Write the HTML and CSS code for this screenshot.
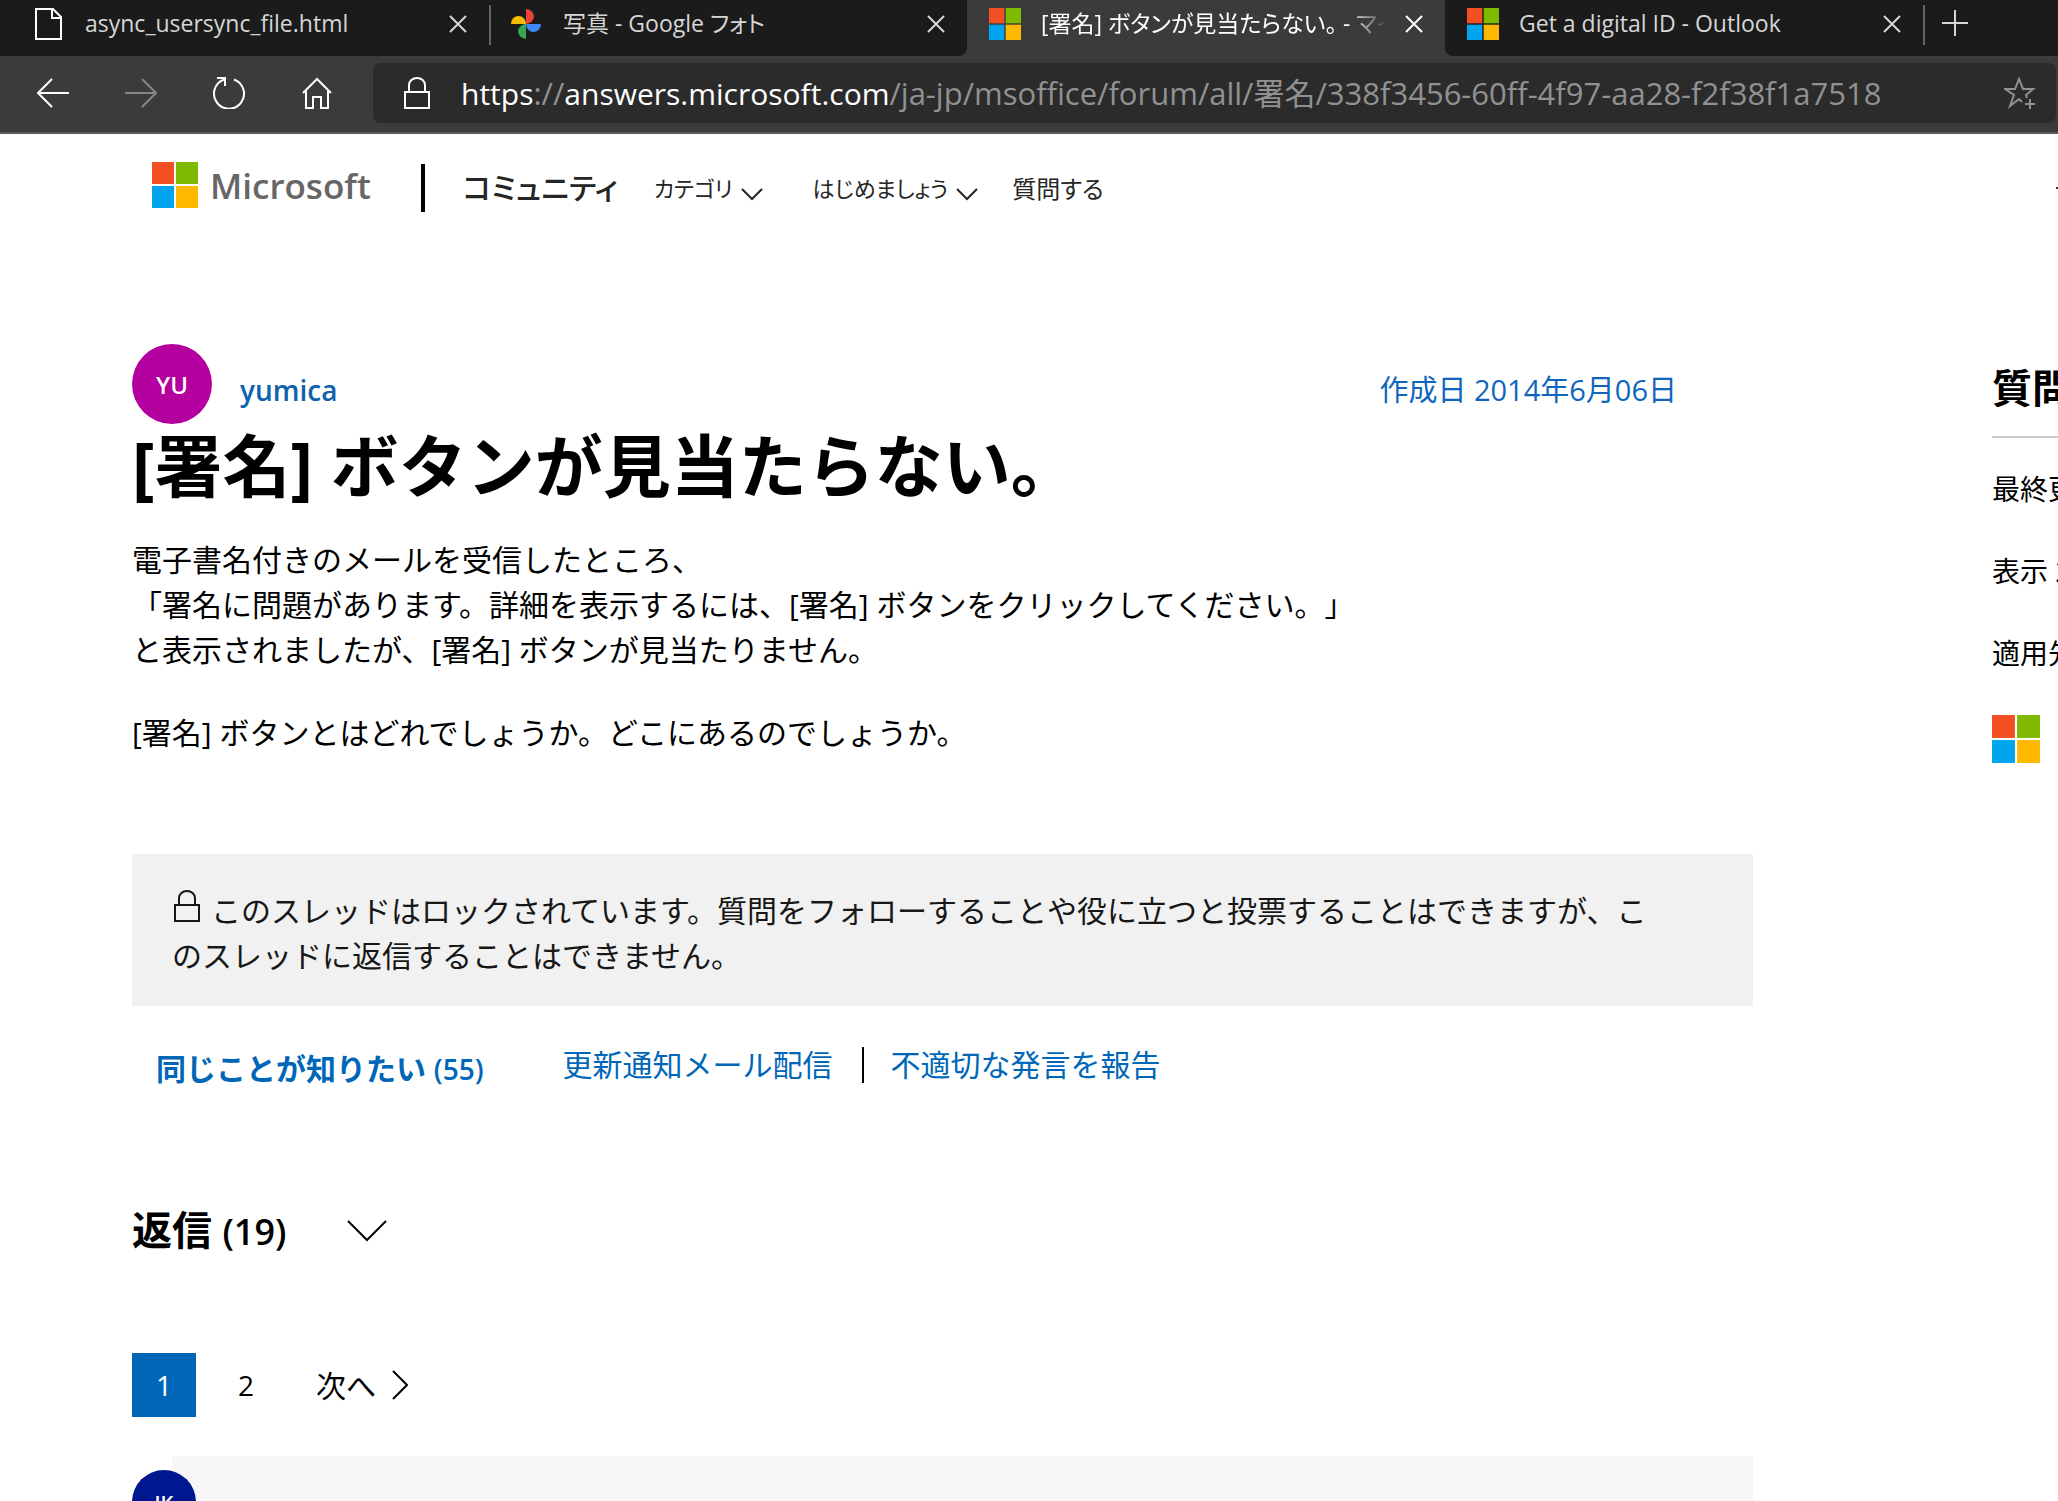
FILE: index.html
```html
<!DOCTYPE html>
<html lang="ja">
<head>
<meta charset="utf-8">
<title>[署名] ボタンが見当たらない。 - マイクロソフト コミュニティ</title>
<link rel="stylesheet" href="styles.css">
</head>
<body>
<svg class="defs" aria-hidden="true">
  <symbol id="ms" viewBox="0 0 46 46" preserveAspectRatio="none">
    <path fill="#f25022" d="M0 0h22v22H0z"/><path fill="#7fba00" d="M24 0h22v22H24z"/>
    <path fill="#00a4ef" d="M0 24h22v22H0z"/><path fill="#ffb900" d="M24 24h22v22H24z"/>
  </symbol>
  <symbol id="close" viewBox="0 0 18 18"><path d="M1 1l16 16M17 1L1 17" fill="none" stroke="currentColor" stroke-width="2"/></symbol>
  <symbol id="lock" viewBox="0 0 26 32"><path d="M1 15h24v16H1zM5 15V8a8 7 0 0 1 16 0v7" fill="none" stroke="currentColor" stroke-width="2"/></symbol>
  <symbol id="down" viewBox="0 0 40 22"><path d="M1 1l19 19L39 1" fill="none" stroke="currentColor" stroke-width="2"/></symbol>
  <symbol id="down-small" viewBox="0 0 22 14"><path d="M1 2l10 10L21 2" fill="none" stroke="currentColor" stroke-width="2"/></symbol>
</svg>

<nav class="tabs" aria-label="タブ">
  <div class="tab-group tab-group-left">
    <div class="tab">
      <svg class="tab-icon" viewBox="0 0 32 32"><path d="M3 1h17l8 8v22H3zM19 1v9h9" fill="none" stroke="#fff" stroke-width="2"/></svg>
      <span class="tab-title">async_usersync_file.html</span>
      <button class="tab-close" aria-label="タブを閉じる"><svg><use href="#close"/></svg></button>
    </div>
    <div class="tab tab-divided">
      <svg class="tab-icon" viewBox="0 0 32 32"><path fill="#ea4335" d="M15 1a8 8 0 0 1 8 7.500a8 8 0 0 1-8 7.500z"/><path fill="#4285f4" d="M30 16a7.500 8 0 0 1-15 0z"/><path fill="#34a853" d="M15 31a8 8 0 0 1-8-7.500a8 8 0 0 1 8-7.500z"/><path fill="#fbbc04" d="M0 16a7.500 8 0 0 1 15 0z"/></svg>
      <span class="tab-title">写真 - Google フォト</span>
      <button class="tab-close" aria-label="タブを閉じる"><svg><use href="#close"/></svg></button>
    </div>
  </div>
  <div class="tab tab-active">
    <svg class="tab-icon"><use href="#ms"/></svg>
    <span class="tab-title">[署名] ボタンが見当たらない。 - マイクロソフト</span>
    <button class="tab-close" aria-label="タブを閉じる"><svg><use href="#close"/></svg></button>
  </div>
  <div class="tab-group tab-group-right">
    <div class="tab">
      <svg class="tab-icon"><use href="#ms"/></svg>
      <span class="tab-title">Get a digital ID - Outlook</span>
      <button class="tab-close" aria-label="タブを閉じる"><svg><use href="#close"/></svg></button>
    </div>
    <button class="tab-new" aria-label="新しいタブ"><svg viewBox="0 0 26 26"><path d="M13 0v26M0 13h26" stroke="currentColor" stroke-width="2"/></svg></button>
  </div>
</nav>

<div class="toolbar">
  <button class="tool" aria-label="戻る"><svg viewBox="0 0 32 32"><path d="M32 16H1M15 2L1 16l14 14" fill="none" stroke="currentColor" stroke-width="2"/></svg></button>
  <button class="tool" aria-label="進む" disabled><svg viewBox="0 0 32 32"><path d="M0 16h31M17 2l14 14-14 14" fill="none" stroke="currentColor" stroke-width="2"/></svg></button>
  <button class="tool" aria-label="更新"><svg viewBox="0 0 32 32"><path d="M21 2.500A15 15 0 1 1 11 2.500M4 1h8v8" fill="none" stroke="currentColor" stroke-width="2"/></svg></button>
  <button class="tool" aria-label="ホーム"><svg viewBox="0 0 32 32"><path d="M2 16L16 2l14 14M5 14v17h7V20h8v11h7V14" fill="none" stroke="currentColor" stroke-width="2"/></svg></button>
  <div class="address">
    <svg class="address-lock"><use href="#lock"/></svg>
    <div class="url"><b>https</b>://<b>answers.microsoft.com</b>/ja-jp/msoffice/forum/all/署名/338f3456-60ff-4f97-aa28-f2f38f1a7518</div>
    <button class="star" aria-label="お気に入りに追加"><svg viewBox="0 0 32 32"><path d="M18 25l-3-3-9 7 4-11-9-6h10l4-10 4 10h10l-7 6 1 3M26 22v10M21 27h10" fill="none" stroke="currentColor" stroke-width="2"/></svg></button>
  </div>
</div>

<div class="page">
  <header class="site-header">
    <a class="brand" href="#"><svg class="brand-logo"><use href="#ms"/></svg><span>Microsoft</span></a>
    <a class="community" href="#">コミュニティ</a>
    <button class="menu">カテゴリ<svg><use href="#down-small"/></svg></button>
    <button class="menu">はじめましょう<svg><use href="#down-small"/></svg></button>
    <a class="ask" href="#">質問する</a>
    <button class="search" aria-label="検索"><svg viewBox="0 0 2 12"><path d="M0 5h2v2H0z" fill="#333"/></svg></button>
  </header>

  <div class="columns">
    <main>
      <div class="author">
        <span class="avatar">YU</span>
        <a class="author-name" href="#">yumica</a>
        <a class="created" href="#">作成日 2014年6月06日</a>
      </div>
      <h1>[署名] ボタンが見当たらない。</h1>
      <div class="body">
        <p>電子書名付きのメールを受信したところ、<br>「署名に問題があります。詳細を表示するには、[署名] ボタンをクリックしてください。」<br>と表示されましたが、[署名] ボタンが見当たりません。</p>
        <p>[署名] ボタンとはどれでしょうか。どこにあるのでしょうか。</p>
      </div>
      <div class="locked"><svg><use href="#lock"/></svg>このスレッドはロックされています。質問をフォローすることや役に立つと投票することはできますが、このスレッドに返信することはできません。</div>
      <div class="actions">
        <button class="same">同じことが知りたい <span>(55)</span></button>
        <a class="action" href="#">更新通知メール配信</a>
        <a class="action action-divided" href="#">不適切な発言を報告</a>
      </div>
      <h2><span>返信 <span class="count">(19)</span></span><button class="expand" aria-label="並べ替え"><svg><use href="#down"/></svg></button></h2>
      <nav class="pager" aria-label="ページ">
        <a class="page-no page-current" href="#">1</a>
        <a class="page-no" href="#">2</a>
        <a class="next" href="#">次へ<svg viewBox="0 0 16 30"><path d="M1 1l14 14L1 29" fill="none" stroke="currentColor" stroke-width="2"/></svg></a>
      </nav>
      <article class="reply">
        <span class="avatar avatar-small">JK</span>
        <div class="reply-card"></div>
      </article>
    </main>
    <aside>
      <h3>質問情報</h3>
      <p>最終更新日</p>
      <p>表示 2,000</p>
      <p>適用先:</p>
      <svg class="side-logo"><use href="#ms"/></svg>
    </aside>
  </div>
</div>
</body>
</html>
```
FILE: styles.css
```css
* { box-sizing: border-box; }

body {
  margin: 0;
  height: 100vh;
  overflow: hidden;
  display: flex;
  flex-direction: column;
  background: #fff;
  color: #000;
  font-family: "Open Sans", "Noto Sans CJK JP", sans-serif;
  font-size: 30px;
  line-height: 45px;
  text-spacing-trim: space-all;
}

button {
  padding: 0;
  border: 0;
  background: none;
  color: inherit;
  font: inherit;
}

a { color: inherit; text-decoration: none; }
h1, h2, h3, p { margin: 0; }
svg { display: block; flex: none; }
.defs { position: absolute; width: 0; height: 0; }

/* Browser tabs */
.tabs {
  flex: none;
  display: flex;
  height: 56px;
  background: #3b3b3b;
  color: #d6d6d6;
  font-size: 23px;
  line-height: 32px;
  font-feature-settings: "palt";
}

.tab-group { display: flex; background: #1b1b1b; }
.tab-group-left { padding-left: 11px; border-bottom-right-radius: 8px; }
.tab-group-right { flex: 1; border-bottom-left-radius: 8px; }

.tab {
  display: flex;
  width: 478px;
  height: 48px;
  padding: 0 22px;
  align-items: center;
}

.tab-divided { background: linear-gradient(#666, #666) 0 5px / 2px 40px no-repeat; }
.tab-active { color: #fff; }
.tab-icon { width: 32px; height: 32px; margin-right: 20px; }
.tab-title {
  flex: 1;
  overflow: hidden;
  margin-right: 18px;
  padding-bottom: 2px;
  white-space: nowrap;
}

.tab-active .tab-title {
  -webkit-mask-image: linear-gradient(90deg, #000 88%, transparent);
  mask-image: linear-gradient(90deg, #000 88%, transparent);
}

.tab-close svg { width: 18px; height: 18px; }

.tab-new {
  height: 46px;
  padding-left: 19px;
  background: linear-gradient(#666, #666) 0 5px / 2px 40px no-repeat;
}

.tab-new svg { width: 26px; height: 26px; }

/* Browser toolbar */
.toolbar {
  flex: none;
  display: flex;
  align-items: center;
  height: 78px;
  padding: 6px 2px 8px 9px;
  border-bottom: 2px solid #5c5c5c;
  background: #3b3b3b;
  color: #fff;
}

.tool { display: flex; justify-content: center; width: 88px; }
.tool:disabled { color: #858585; }
.tool svg { width: 32px; height: 32px; }

.address {
  flex: 1;
  display: flex;
  align-items: center;
  height: 60px;
  margin-left: 12px;
  padding: 0 20px 0 31px;
  border-radius: 8px;
  background: #2b2b2b;
  color: #919191;
}

.address-lock { width: 26px; height: 32px; margin-right: 31px; color: #fff; }
.url { flex: 1; white-space: nowrap; font-size: 31px; }
.url b { color: #fff; font-size: 30px; font-weight: 400; }
.star svg { width: 32px; height: 32px; }

/* Site header */
.page { flex: 1; overflow: hidden; }

.site-header {
  display: flex;
  align-items: center;
  height: 108px;
  padding-left: 152px;
  color: #262626;
  font-size: 24px;
  font-feature-settings: "palt";
}

.brand {
  display: flex;
  align-items: center;
  padding: 0 50px 6px 0;
  color: #666;
  font-size: 35px;
  font-weight: 600;
}

.brand-logo { width: 46px; height: 46px; margin-right: 12px; }

.community {
  padding-left: 38px;
  border-left: 4px solid #000;
  font-size: 30px;
  line-height: 48px;
  font-weight: 500;
}

.menu { display: flex; align-items: center; margin-left: 36px; font-size: 22px; }
.menu + .menu { margin-left: 50px; }
.menu svg { width: 22px; height: 14px; margin: 12px 0 0 8px; }
.ask { margin-left: 34px; }
.search { margin-left: auto; }
.search svg { width: 2px; height: 12px; }

/* Question */
.columns {
  display: grid;
  grid-template-columns: minmax(0, 1fr) 66px;
  column-gap: 239px;
  padding: 102px 0 0 132px;
}

.author { display: flex; align-items: center; padding-right: 76px; }

.avatar {
  display: flex;
  align-items: center;
  justify-content: center;
  flex: none;
  width: 80px;
  height: 80px;
  border-radius: 50%;
  background: #b4009e;
  color: #fff;
  font-size: 24px;
  font-weight: 600;
}

.author-name {
  margin: 12px auto 0 28px;
  color: #0f62ac;
  font-size: 28px;
  font-weight: 600;
}

.created { margin-top: 10px; color: #1066bd; font-size: 29px; }

h1 { font-size: 68px; line-height: 84px; font-weight: 700; }

.body { padding: 29px 0 99px; }
.body p + p { margin-top: 38px; }

.locked {
  padding: 34px 90px 28px 40px;
  background: #f1f1f1;
  color: #171717;
}

.locked svg {
  display: inline-block;
  width: 26px;
  height: 32px;
  margin: 0 11px 0 2px;
}

.actions {
  display: flex;
  align-items: flex-start;
  padding: 36px 24px 0;
  color: #0067b8;
}

.same { margin: 4px 79px 0 0; font-weight: 700; }
.same span { font-size: 28px; font-weight: 600; }

.action-divided {
  margin-left: 29px;
  padding-left: 29px;
  background: linear-gradient(#000, #000) 0 5px / 2px 36px no-repeat;
}

h2 {
  display: flex;
  align-items: center;
  padding-top: 108px;
  font-size: 40px;
  line-height: 60px;
}

.count { font-size: 36px; font-weight: 600; }
.expand { margin-left: 61px; }
.expand svg { width: 40px; height: 22px; }

.pager {
  display: flex;
  align-items: center;
  gap: 18px;
  padding-top: 91px;
  font-size: 28px;
}

.page-no { width: 64px; line-height: 64px; text-align: center; }
.page-current { background: #0067b8; color: #fff; }
.next { display: flex; align-items: center; margin-left: 20px; font-size: 30px; }
.next svg { width: 16px; height: 30px; margin-left: 16px; }

.reply { display: flex; padding-top: 39px; }
.reply-card { flex: 1; height: 300px; margin-left: -24px; background: #f7f7f7; }

.avatar-small {
  position: relative;
  width: 64px;
  height: 64px;
  margin-top: 14px;
  background: #00188f;
  font-size: 20px;
}

/* Side column */
aside { overflow: hidden; white-space: nowrap; font-size: 28px; }

h3 {
  width: 400px;
  padding: 14px 0 18px;
  border-bottom: 2px solid #ccc;
  font-size: 40px;
  line-height: 60px;
}

aside p { margin-top: 37px; }
aside p:first-of-type { margin-top: 29px; }
.side-logo { width: 48px; height: 48px; margin-top: 39px; }
```
